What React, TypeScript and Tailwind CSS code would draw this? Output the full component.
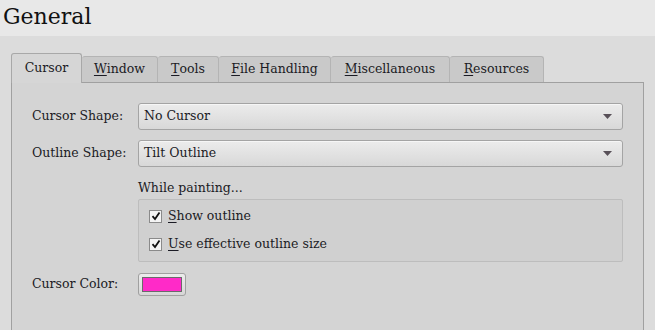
import React from 'react';

const font = "font-['DejaVu_Serif',serif]";

const tabs = [
  { key: 'Cursor', mnemonic: '', rest: 'Cursor', w: 'w-[71px]' },
  { key: 'Window', mnemonic: 'W', rest: 'indow', w: 'w-[76px]' },
  { key: 'Tools', mnemonic: 'T', rest: 'ools', w: 'w-[61px]' },
  { key: 'File', mnemonic: 'F', rest: 'ile Handling', w: 'w-[112px]' },
  { key: 'Misc', mnemonic: 'M', rest: 'iscellaneous', w: 'w-[119px]' },
  { key: 'Res', mnemonic: 'R', rest: 'esources', w: 'w-[94px]' },
];

const Combo = ({ value }: { value: string }) => (
  <div className="flex-1 h-[27px] flex items-center justify-between px-[5px] rounded-[3px] border border-[#a4a4a4] bg-gradient-to-b from-[#ececec] to-[#d8d8d8] shadow-[inset_0_1px_0_#f6f6f6]">
    <span className="text-[#1b1b24]">{value}</span>
    <svg width="9" height="5" viewBox="0 0 9 5" className="mr-[5px]">
      <path d="M0 0 H9 L4.5 5 Z" fill="#585058" />
    </svg>
  </div>
);

const Check = ({ m, rest }: { m: string; rest: string }) => (
  <div className="flex items-center gap-[6px] h-[28px]">
    <div className="w-[13px] h-[13px] border border-[#8a8a8a] bg-[#f4f4f4] flex items-center justify-center">
      <svg width="10" height="10" viewBox="0 0 10 10">
        <path d="M1.5 5.2 L4 8 L8.5 1.5" stroke="#111" strokeWidth="1.8" fill="none" />
      </svg>
    </div>
    <span className="text-[#1b1b24]"><span className="underline underline-offset-2">{m}</span>{rest}</span>
  </div>
);

export default function App() {
  return (
    <div className={`w-[655px] h-[330px] overflow-hidden bg-[#dcdcdc] text-[12.5px] ${font}`}>
      <div className="h-[36px] bg-[#e8e8e8] pl-[3px] flex items-start">
        <span className="text-[22px] leading-[34px] text-[#111]">General</span>
      </div>

      <div className="pl-[11px] pr-[11px] pt-[16px]">
        <div className="flex items-end h-[30px]">
          {tabs.map((t, i) =>
            i === 0 ? (
              <div key={t.key} className={`${t.w} h-[30px] -mb-px relative z-10 bg-[#d6d6d6] border border-b-0 border-[#a8a8a8] rounded-t-[3px] flex items-center justify-center text-[#1b1b24]`}>
                {t.rest}
              </div>
            ) : (
              <div key={t.key} className={`${t.w} h-[26px] bg-[#c9c9c9] border border-b-0 border-l-0 border-[#b4b4b4] rounded-t-[3px] flex items-center justify-center text-[#1b1b24]`}>
                <span className="underline underline-offset-2">{t.mnemonic}</span>{t.rest}
              </div>
            )
          )}
        </div>
        <div className="h-[260px] border border-[#a0a0a0] bg-[#d4d4d4] pl-[20px] pr-[20px] pt-[20px]">
          <div className="flex items-center gap-[14px] h-[27px]">
            <div className="w-[92px] text-[#1b1b24] whitespace-nowrap">Cursor Shape:</div>
            <Combo value="No Cursor" />
          </div>
          <div className="flex items-center gap-[14px] h-[27px] mt-[10px]">
            <div className="w-[92px] text-[#1b1b24] whitespace-nowrap">Outline Shape:</div>
            <Combo value="Tilt Outline" />
          </div>
          <div className="ml-[106px] mt-[12px] text-[#1b1b24] h-[20px]">While painting...</div>
          <div className="ml-[106px] border border-[#bdbdbd] rounded-[2px] bg-[#d0d0d0] px-[10px] pt-[2px] pb-[3px]">
            <Check m="S" rest="how outline" />
            <Check m="U" rest="se effective outline size" />
          </div>
          <div className="flex items-center gap-[14px] mt-[11px] h-[23px]">
            <div className="w-[92px] text-[#1b1b24] whitespace-nowrap">Cursor Color:</div>
            <div className="w-[48px] h-[23px] rounded-[3px] border border-[#a0a0a0] bg-gradient-to-b from-[#ececec] to-[#d6d6d6] p-[3px]">
              <div className="w-full h-full bg-[#ff2ac8] border border-[#6a6a6a]" />
            </div>
          </div>
        </div>
      </div>
    </div>
  );
}
